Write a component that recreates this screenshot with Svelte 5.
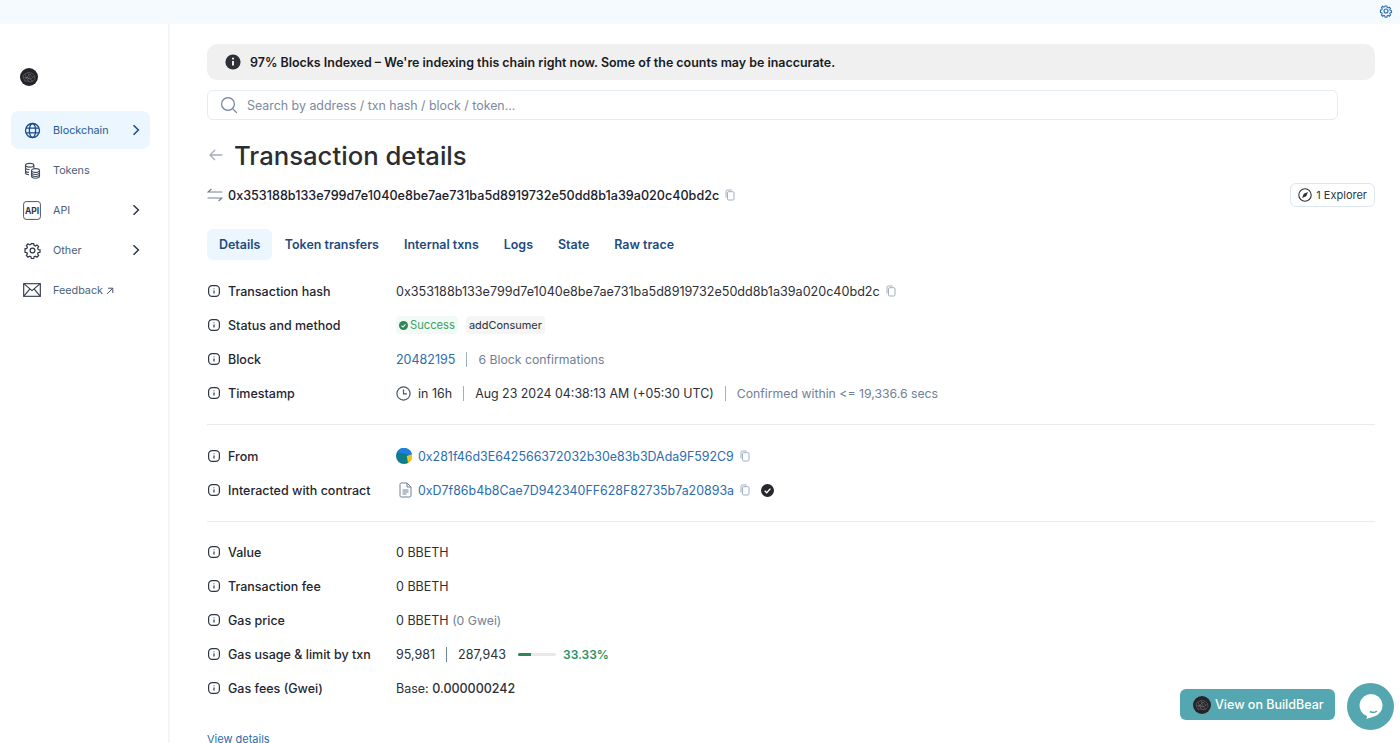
<script>
  const navItems = [
    { label: 'Blockchain', icon: 'globe', active: true, arrow: true },
    { label: 'Tokens', icon: 'tokens', arrow: false },
    { label: 'API', icon: 'api', arrow: true },
    { label: 'Other', icon: 'gear', arrow: true },
    { label: 'Feedback', icon: 'mail', arrow: false, external: true }
  ];
  const tabs = ['Details', 'Token transfers', 'Internal txns', 'Logs', 'State', 'Raw trace'];
  const hash = '0x353188b133e799d7e1040e8be7ae731ba5d8919732e50dd8b1a39a020c40bd2c';
</script>

{#snippet info()}
  <svg class="info" viewBox="0 0 14 14" fill="none" stroke="#2d3748" stroke-width="1.2">
    <rect x="1.6" y="1.6" width="10.8" height="10.8" rx="3.6" />
    <path d="M7 6.4v3M7 4.4v.9" />
  </svg>
{/snippet}

{#snippet copy()}
  <svg class="copy" viewBox="0 0 12 14" fill="none" stroke="#a0aec0" stroke-width="1.2">
    <rect x="3" y="3" width="7.8" height="10" rx="1.4" />
    <path d="M1.2 10V2.4C1.2 1.6 1.8 1 2.6 1H8" />
  </svg>
{/snippet}

{#snippet logo(size)}
  <svg class="logo" width={size} height={size} viewBox="0 0 18 18">
    <circle cx="9" cy="9" r="9" fill="#242428" />
    <path d="M3 7.500l2.500-2 3-1.200 3.500 1 2.500 2.200.5 3-2 2.500-3 .8-2.500-1-2.500.5-1.500-3zM5 6l1.500 3.500L10 6l2.500 3M3.500 9.500h3l2 4M6.500 9.500l4 1.500 3.500-2.500M10.500 11l2 2.500M8 5l2.500 6M5 11l3-1.500 1 2" fill="none" stroke="#77777e" stroke-width=".55" />
  </svg>
{/snippet}

<div class="page">
  <div class="topbar">
    <svg width="14" height="14" viewBox="0 0 24 24" fill="none" stroke="#2b6cb0" stroke-width="2">
      <path d="M10.3 2.600h3.400l.5 2.600 1.900.8 2.200-1.500 2.400 2.400-1.500 2.200.8 1.900 2.600.5v3.400l-2.600.5-.8 1.900 1.500 2.200-2.400 2.400-2.200-1.500-1.900.8-.5 2.600h-3.400l-.5-2.600-1.900-.8-2.200 1.500-2.400-2.400 1.500-2.200-.8-1.900-2.600-.5V10l2.600-.5.8-1.900-1.500-2.200 2.400-2.400 2.200 1.500 1.900-.8z" transform="translate(1.2 1.2) scale(.9)" />
      <circle cx="12" cy="12" r="3.4" />
    </svg>
  </div>

  <div class="body">
    <aside class="sidebar">
      <div class="brand">{@render logo(18)}</div>
      <nav>
        {#each navItems as item}
          <div class="nav-item" class:active={item.active}>
            <span class="nav-icon">
              {#if item.icon === 'globe'}
                <svg width="17" height="17" viewBox="0 0 18 18" fill="none" stroke="#174a8a" stroke-width="1.4">
                  <circle cx="9" cy="9" r="7.4" />
                  <ellipse cx="9" cy="9" rx="3.3" ry="7.4" />
                  <path d="M2 6.400h14M2 11.600h14" />
                </svg>
              {:else if item.icon === 'tokens'}
                <svg width="17" height="17" viewBox="0 0 18 18" fill="none" stroke="#3f4b5e" stroke-width="1.2">
                  <ellipse cx="6" cy="3.400" rx="4.400" ry="2" />
                  <path d="M1.600 3.400v8c0 1.100 1.600 1.900 3.600 2M1.600 6.200c0 1.100 2 2 4.400 2M1.600 9c0 1.100 1.600 1.900 3.600 2M10.400 3.400V7" />
                  <ellipse cx="12.200" cy="9" rx="4.200" ry="2" />
                  <path d="M8 9v6.200c0 1.100 1.900 2 4.200 2s4.200-.9 4.200-2V9M8 11.200c0 1.100 1.900 2 4.200 2s4.200-.9 4.200-2M8 13.300c0 1.100 1.900 2 4.200 2s4.200-.9 4.200-2" />
                </svg>
              {:else if item.icon === 'api'}
                <svg class="api-icon" width="18" height="19" viewBox="0 0 18 19" fill="none">
                  <rect x=".6" y=".6" width="16.800" height="17.800" rx="2.600" stroke="#4a5568" stroke-width="1" />
                  <text x="9" y="12.800" text-anchor="middle" class="api-text">API</text>
                </svg>
              {:else if item.icon === 'gear'}
                <svg width="17" height="17" viewBox="0 0 24 24" fill="none" stroke="#2d3748" stroke-width="1.7">
                  <path d="M10.300 2.600h3.400l.5 2.600 1.900.8 2.200-1.500 2.400 2.400-1.500 2.200.8 1.900 2.600.5v3.400l-2.600.5-.8 1.900 1.500 2.200-2.400 2.400-2.200-1.500-1.900.8-.5 2.600h-3.400l-.5-2.600-1.900-.8-2.200 1.500-2.400-2.400 1.500-2.200-.8-1.900-2.600-.5V10l2.600-.5.8-1.900-1.500-2.200 2.400-2.400 2.200 1.500 1.900-.8z" transform="translate(0 -.4)" />
                  <circle cx="12" cy="12" r="3.400" />
                </svg>
              {:else}
                <svg width="18" height="14" viewBox="0 0 18 14" fill="none" stroke="#2d3748" stroke-width="1.100">
                  <rect x=".7" y=".7" width="16.600" height="12.600" />
                  <path d="M.7.7L9 7.600 17.300.7M.7 13.300l6-7.200M17.300 13.300l-6-7.200" />
                </svg>
              {/if}
            </span>
            <span class="nav-label">{item.label}</span>
            {#if item.external}
              <svg class="ext" width="8" height="8" viewBox="0 0 8 8" fill="none" stroke="#4a5568" stroke-width="1"><path d="M1 7l5.600-5.600M2 1.200h4.800V6" /></svg>
            {/if}
            {#if item.arrow}
              <svg class="chev" width="8" height="12" viewBox="0 0 8 12" fill="none" stroke={item.active ? '#174a8a' : '#2d3748'} stroke-width="1.500"><path d="M1.500 1.200L6.400 6l-4.900 4.800" /></svg>
            {/if}
          </div>
        {/each}
      </nav>
    </aside>

    <main>
      <div class="alert">
        <svg width="16" height="16" viewBox="0 0 16 16">
          <circle cx="8" cy="8" r="7.600" fill="#2d3036" />
          <path d="M8 7v4.600M8 3.800v1.600" stroke="#fff" stroke-width="1.800" />
        </svg>
        <span>97% Blocks Indexed – We're indexing this chain right now. Some of the counts may be inaccurate.</span>
      </div>

      <div class="search">
        <svg width="18" height="18" viewBox="0 0 18 18" fill="none" stroke="#718096" stroke-width="1.200">
          <circle cx="8" cy="8" r="6.400" />
          <path d="M12.800 12.800l4 4" />
        </svg>
        <span>Search by address / txn hash / block / token...</span>
      </div>

      <div class="title-row">
        <svg width="14" height="12" viewBox="0 0 14 12" fill="none" stroke="#a0aec0" stroke-width="1.300"><path d="M13.400 6H1.200M6 1L1 6l5 5" /></svg>
        <h1>Transaction details</h1>
      </div>

      <div class="hash-row">
        <svg width="16" height="14" viewBox="0 0 16 14" fill="none" stroke="#718096" stroke-width="1.200">
          <path d="M15.400 4H1.200L4.400 1M.6 10h14.200l-3.200 3" />
        </svg>
        <span class="hash">{hash}</span>
        {@render copy()}
        <div class="explorer">
          <svg width="14" height="14" viewBox="0 0 14 14" fill="none">
            <circle cx="7" cy="7" r="6.200" stroke="#2d3036" stroke-width="1.100" />
            <path d="M10 4L8.200 8.200 4 10l1.800-4.200z" fill="#2d3036" />
          </svg>
          <span>1 Explorer</span>
        </div>
      </div>

      <div class="tabs">
        {#each tabs as tab, i}
          <div class="tab" class:selected={i === 0}>{tab}</div>
        {/each}
      </div>

      <section class="group">
        <div class="row">
          <div class="key">{@render info()}Transaction hash</div>
          <div class="val tx">{hash}{@render copy()}</div>
        </div>
        <div class="row">
          <div class="key">{@render info()}Status and method</div>
          <div class="val">
            <span class="tag success">
              <svg width="9" height="9" viewBox="0 0 10 10"><circle cx="5" cy="5" r="5" fill="#2f855a" /><path d="M2.800 5.200l1.600 1.500 2.800-3" fill="none" stroke="#fff" stroke-width="1.200" /></svg>
              Success
            </span>
            <span class="tag method">addConsumer</span>
          </div>
        </div>
        <div class="row">
          <div class="key">{@render info()}Block</div>
          <div class="val"><span class="link">20482195</span><i class="sep"></i><span class="muted">6 Block confirmations</span></div>
        </div>
        <div class="row">
          <div class="key">{@render info()}Timestamp</div>
          <div class="val">
            <svg class="clock" width="15" height="15" viewBox="0 0 15 15" fill="none" stroke="#4a5568" stroke-width="1.200"><circle cx="7.500" cy="7.500" r="6.600" /><path d="M7.500 3.600v4.200h3.400" /></svg>
            in 16h<i class="sep"></i><span class="date">Aug 23 2024 04:38:13 AM (+05:30 UTC)</span><i class="sep"></i><span class="muted">Confirmed within &lt;= 19,336.6 secs</span>
          </div>
        </div>
      </section>

      <section class="group">
        <div class="row">
          <div class="key">{@render info()}From</div>
          <div class="val">
            <svg class="avatar" width="16" height="16" viewBox="0 0 16 16">
              <circle cx="8" cy="8" r="8" fill="#0f7d8c" />
              <path d="M1 4.200A8 8 0 0 1 16 8L8 5.600z" fill="#1e7fe0" />
              <path d="M16 6.200A8 8 0 0 1 12 15L10.800 8z" fill="#f2c511" />
            </svg>
            <span class="link addr">0x281f46d3E642566372032b30e83b3DAda9F592C9</span>{@render copy()}
          </div>
        </div>
        <div class="row">
          <div class="key">{@render info()}Interacted with contract</div>
          <div class="val">
            <svg class="avatar doc" width="13" height="16" viewBox="0 0 13 16" fill="none" stroke="#718096" stroke-width="1"><path d="M1 2.200C1 1.500 1.500 1 2.200 1H8l4 4v8.800c0 .7-.5 1.200-1.200 1.200H2.200C1.500 15 1 14.500 1 13.800zM8 1v4h4M3.500 8h6M3.500 10h6M3.500 12h4" /></svg>
            <span class="link addr">0xD7f86b4b8Cae7D942340FF628F82735b7a20893a</span>{@render copy()}
            <svg class="verified" width="13" height="13" viewBox="0 0 13 13"><circle cx="6.500" cy="6.500" r="6.500" fill="#26282c" /><path d="M3.700 6.800l2 2 3.700-4.200" fill="none" stroke="#fff" stroke-width="1.400" /></svg>
          </div>
        </div>
      </section>

      <section class="group last">
        <div class="row">
          <div class="key">{@render info()}Value</div>
          <div class="val">0 BBETH</div>
        </div>
        <div class="row">
          <div class="key">{@render info()}Transaction fee</div>
          <div class="val">0 BBETH</div>
        </div>
        <div class="row">
          <div class="key">{@render info()}Gas price</div>
          <div class="val">0 BBETH&nbsp;<span class="muted">(0 Gwei)</span></div>
        </div>
        <div class="row">
          <div class="key">{@render info()}Gas usage &amp; limit by txn</div>
          <div class="val">
            95,981<i class="sep dark"></i>287,943
            <span class="bar"><span class="fill" style="width: 33.33%"></span></span>
            <span class="pct">33.33%</span>
          </div>
        </div>
        <div class="row">
          <div class="key">{@render info()}Gas fees (Gwei)</div>
          <div class="val">Base:&nbsp;<span class="strong">0.000000242</span></div>
        </div>
      </section>

      <div class="view-details">View details</div>
    </main>
  </div>

  <div class="buildbear">{@render logo(18)}<span>View on BuildBear</span></div>
  <div class="chat">
    <svg width="24" height="25" viewBox="0 0 24 25">
      <path d="M12 0a11.500 11.500 0 0 1 3 22.600L7.500 25l.6-2.700A11.500 11.500 0 0 1 12 0z" fill="#fff" />
      <path d="M11 17.500q3.500 2 7-.5" fill="none" stroke="#54a6b0" stroke-width="1.500" />
    </svg>
  </div>
</div>

<style>
  :global(body) {
    margin: 0;
    background: #fff;
    font-family: Inter, "Liberation Sans", sans-serif;
    color: #1a202c;
    overflow: hidden;
  }

  .page {
    position: relative;
    height: 743px;
    overflow: hidden;
  }

  .topbar {
    height: 24px;
    background: #f5fafe;
    display: flex;
    justify-content: flex-end;
    align-items: flex-start;
    padding: 4px 7px 0 0;
    box-sizing: border-box;
  }

  .body {
    display: flex;
    height: 719px;
  }

  .sidebar {
    width: 170px;
    flex: none;
    border-right: 2px solid #f4f5f7;
    box-sizing: border-box;
    padding: 44px 18px 0 11px;
  }

  .brand {
    height: 18px;
    padding-left: 9px;
    margin-bottom: 25px;
  }

  .logo {
    display: block;
    flex: none;
  }

  .nav-item {
    display: flex;
    align-items: center;
    height: 38px;
    margin-bottom: 2px;
    border-radius: 8px;
    padding: 0 10px 0 12px;
    font-size: 10.8px;
    color: #4a5f7c;
  }

  .nav-item.active {
    background: #ebf6fe;
    color: #1f5a96;
  }

  .nav-icon {
    width: 18px;
    display: flex;
    justify-content: center;
    margin-right: 12px;
    flex: none;
  }

  .api-icon {
    flex: none;
  }

  .api-text {
    font: 700 8.5px Inter, sans-serif;
    fill: #2d3748;
  }

  .ext {
    margin-left: 3px;
    margin-top: 2px;
  }

  .chev {
    margin-left: auto;
  }

  main {
    flex: 1;
    min-width: 0;
    padding: 20px 25px 0 37px;
  }

  .alert {
    height: 36px;
    background: #f0f0f0;
    border-radius: 10px;
    display: flex;
    align-items: center;
    gap: 9px;
    padding-left: 18px;
    font-size: 12.45px;
    font-weight: 600;
    color: #1a1b1e;
  }

  .search {
    height: 30px;
    margin-top: 10px;
    margin-right: 37px;
    border: 1px solid #e2ecf5;
    border-radius: 6px;
    display: flex;
    align-items: center;
    gap: 9px;
    padding-left: 12px;
    font-size: 12.4px;
    color: #7b8a9e;
    box-sizing: border-box;
  }

  .title-row {
    display: flex;
    align-items: center;
    gap: 11px;
    margin-top: 17px;
    height: 36px;
    padding-left: 2px;
  }

  h1 {
    margin: 0;
    font: 500 25.7px Inter, sans-serif;
    color: #2a2d33;
  }

  .hash-row {
    display: flex;
    align-items: center;
    margin-top: 9px;
    height: 26px;
    font-size: 12.6px;
    font-weight: 500;
    color: #1a202c;
  }

  .hash {
    margin-left: 5px;
  }

  .copy {
    width: 10px;
    height: 12px;
    margin-left: 6px;
    flex: none;
  }

  .explorer {
    margin-left: auto;
    height: 24px;
    border: 1px solid #dbe6f0;
    border-radius: 6px;
    display: flex;
    align-items: center;
    gap: 4px;
    padding: 0 7px;
    font-size: 11px;
    font-weight: 400;
    color: #2d3748;
    box-sizing: border-box;
  }

  .tabs {
    display: flex;
    margin-top: 21px;
  }

  .tab {
    height: 31px;
    line-height: 31px;
    padding: 0 12.5px;
    font-size: 12.45px;
    font-weight: 600;
    color: #1f4b80;
    border-radius: 6px;
  }

  .tab.selected {
    background: #ebf6fe;
    padding: 0 12px;
  }

  .group {
    padding: 14px 0;
    border-bottom: 1px solid #e9ebee;
  }

  .group.last {
    border-bottom: none;
    padding: 13px 0 27px;
  }

  .row {
    display: flex;
    align-items: center;
    height: 34px;
    font-size: 12.5px;
  }

  .key {
    width: 189px;
    flex: none;
    display: flex;
    align-items: center;
    font-weight: 500;
    color: #1f2630;
  }

  .info {
    width: 14px;
    height: 14px;
    margin-right: 7px;
    flex: none;
  }

  .val {
    display: flex;
    align-items: center;
    white-space: nowrap;
    color: #2d3036;
  }

  .tx {
    font-size: 12.58px;
  }

  .date {
    font-size: 12.4px;
  }

  .link {
    color: #2b6cb0;
  }

  .addr {
    font-size: 12.42px;
  }

  .muted {
    color: #718096;
    font-size: 12.25px;
  }

  .strong {
    font-weight: 500;
  }

  .sep {
    display: inline-block;
    width: 1px;
    height: 15px;
    background: #a0aec0;
    margin: 0 11px;
  }

  .sep.dark {
    background: #718096;
  }

  .tag {
    display: inline-flex;
    align-items: center;
    height: 18px;
    padding: 0 3px;
    border-radius: 4px;
    font-size: 11.2px;
    gap: 2px;
  }

  .success {
    background: #f2faf6;
    color: #38a169;
  }

  .method {
    background: #f5f5f5;
    margin-left: 8px;
    color: #2d3036;
    font-size: 10.95px;
  }

  .clock {
    margin-right: 7px;
  }

  .avatar {
    margin-right: 6px;
  }

  .doc {
    margin-left: 3px;
  }

  .verified {
    margin-left: 11px;
  }

  .bar {
    display: inline-block;
    width: 38px;
    height: 3px;
    background: #e8e8e8;
    border-radius: 2px;
    margin: 0 7px 0 12px;
    overflow: hidden;
  }

  .fill {
    display: block;
    height: 100%;
    background: #2f855a;
  }

  .pct {
    color: #2a9160;
    font-weight: 600;
    font-size: 12px;
  }

  .view-details {
    font-size: 11px;
    color: #2b6cb0;
  }

  .buildbear {
    position: absolute;
    left: 1180px;
    top: 689px;
    width: 155px;
    height: 31px;
    background: #54a6b0;
    border-radius: 6px;
    display: flex;
    align-items: center;
    gap: 4px;
    padding-left: 13px;
    box-sizing: border-box;
    color: #fff;
    font-size: 12.5px;
    font-weight: 500;
  }

  .chat {
    position: absolute;
    left: 1347px;
    top: 683px;
    width: 47px;
    height: 47px;
    border-radius: 50%;
    background: #54a6b0;
    display: flex;
    align-items: center;
    justify-content: center;
  }
</style>
